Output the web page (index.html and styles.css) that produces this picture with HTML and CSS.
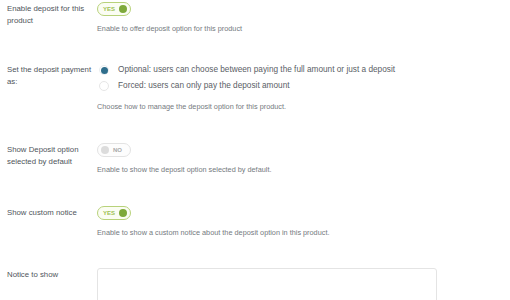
FILE: index.html
```html
<!DOCTYPE html>
<html>
<head>
<meta charset="utf-8">
<link rel="stylesheet" href="styles.css">
</head>
<body>
<div class="form">
  <div class="row">
    <div class="label">Enable deposit for this product</div>
    <div class="field">
      <div class="toggle on"><span class="ttext">YES</span><span class="knob"></span></div>
      <div class="desc desc-toggle">Enable to offer deposit option for this product</div>
    </div>
  </div>
  <div class="row row-radio">
    <div class="label">Set the deposit payment as:</div>
    <div class="field">
      <div class="radio-list">
        <div class="radio-item"><span class="radio checked"><span class="dot"></span></span><span>Optional: users can choose between paying the full amount or just a deposit</span></div>
        <div class="radio-item"><span class="radio"></span><span>Forced: users can only pay the deposit amount</span></div>
      </div>
      <div class="desc desc-radio">Choose how to manage the deposit option for this product.</div>
    </div>
  </div>
  <div class="row">
    <div class="label">Show Deposit option selected by default</div>
    <div class="field">
      <div class="toggle off"><span class="knob"></span><span class="ttext">NO</span></div>
      <div class="desc desc-toggle">Enable to show the deposit option selected by default.</div>
    </div>
  </div>
  <div class="row">
    <div class="label">Show custom notice</div>
    <div class="field">
      <div class="toggle on"><span class="ttext">YES</span><span class="knob"></span></div>
      <div class="desc desc-toggle">Enable to show a custom notice about the deposit option in this product.</div>
    </div>
  </div>
  <div class="row">
    <div class="label label-notice">Notice to show</div>
    <div class="field">
      <div class="textarea"></div>
    </div>
  </div>
</div>
</body>
</html>
```
FILE: styles.css
```css
html, body {
  margin: 0;
  padding: 0;
  background: #ffffff;
  overflow: hidden;
}
body {
  font-family: "Liberation Sans", Arial, sans-serif;
  color: #50575e;
  width: 510px;
  height: 300px;
}
.form {
  display: flex;
  flex-direction: column;
  padding-top: 2px;
}
.row {
  display: flex;
  padding-bottom: 32px;
}
.label {
  width: 90px;
  flex: none;
  padding-left: 7px;
  font-size: 7.8px;
  line-height: 12px;
  padding-top: 1px;
  color: #4f555b;
}
.row-radio .label {
  padding-top: 0;
  margin-top: -1px;
}
.field {
  flex: 1;
  display: flex;
  flex-direction: column;
}
.toggle {
  box-sizing: border-box;
  width: 34px;
  height: 14px;
  border-radius: 7px;
  display: flex;
  align-items: center;
  padding: 0 3px 0 5px;
  gap: 4px;
  font-size: 6px;
  font-weight: bold;
}
.toggle.on {
  border: 1px solid #b8d27a;
  background: #fbfdf3;
  color: #9cc052;
  justify-content: space-between;
}
.toggle.off {
  border: 1px solid #e3e3e3;
  background: #fdfdfd;
  color: #a9a9a9;
  padding: 0 5px 0 3px;
  justify-content: flex-start;
}
.knob {
  width: 8px;
  height: 8px;
  border-radius: 50%;
}
.on .knob { background: #7ea93a; }
.off .knob { background: #dcdcdc; }
.desc {
  font-size: 7.3px;
  line-height: 8px;
  color: #757a80;
}
.desc-toggle {
  margin-top: 9px;
}
.radio-list {
  display: flex;
  flex-direction: column;
  gap: 6px;
}
.radio-item {
  display: flex;
  align-items: center;
  gap: 9px;
  font-size: 8.25px;
  line-height: 10px;
  color: #5a6066;
  padding-left: 2px;
}
.radio {
  box-sizing: border-box;
  width: 10px;
  height: 10px;
  border-radius: 50%;
  border: 1px solid #e6e6e6;
  background: #fff;
  display: flex;
  align-items: center;
  justify-content: center;
  flex: none;
}
.radio.checked {
  border-color: #e9eef1;
}
.dot {
  width: 7px;
  height: 7px;
  border-radius: 50%;
  background: #2f6e8c;
}
.desc-radio {
  margin-top: 12px;
}
.label-notice {
  padding-top: 0;
}
.textarea {
  box-sizing: border-box;
  width: 340px;
  height: 60px;
  border: 1px solid #e4e4e4;
  border-radius: 3px;
  background: #fff;
  margin-top: -1px;
}
```
